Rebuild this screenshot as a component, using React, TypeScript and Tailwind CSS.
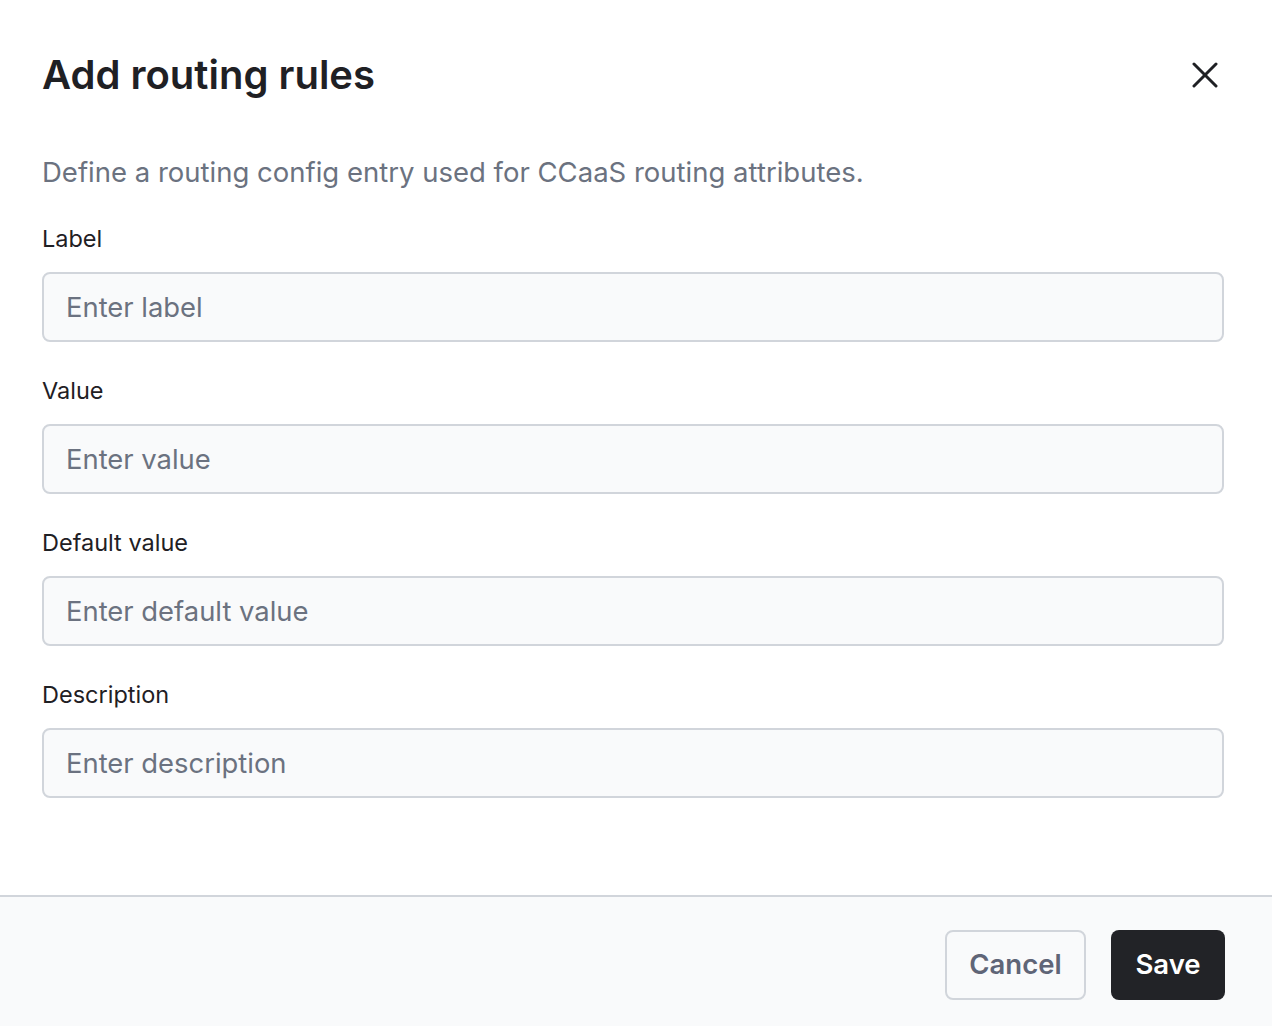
import React from 'react';

const fields = [
  { label: 'Label', placeholder: 'Enter label' },
  { label: 'Value', placeholder: 'Enter value' },
  { label: 'Default value', placeholder: 'Enter default value' },
  { label: 'Description', placeholder: 'Enter description' },
];

function CloseIcon() {
  return (
    <svg width="26" height="26" viewBox="0 0 26 26" fill="none" stroke="#1f2024" strokeWidth="3" strokeLinecap="round">
      <path d="M2 2 24 24" />
      <path d="M24 2 2 24" />
    </svg>
  );
}

export default function App() {
  return (
    <div
      className="flex h-[1026px] w-full flex-col bg-white"
      style={{ fontFamily: 'Inter, "Noto Sans", sans-serif' }}
    >
      <div className="flex-1 pl-[42px] pr-[48px] pt-[53px]">
        {/* Header */}
        <div className="flex items-center justify-between">
          <h1 className="text-[40px] font-semibold leading-[44px] text-[#1f2024]">
            Add routing rules
          </h1>
          <button className="mr-[6px] flex h-[26px] w-[26px] items-center justify-center">
            <CloseIcon />
          </button>
        </div>

        <p className="mt-[57px] text-[27.5px] leading-[36px] text-[#6b7280]">
          Define a routing config entry used for CCaaS routing attributes.
        </p>

        {/* Fields */}
        <div className="mt-[34px] flex flex-col gap-[34px]">
          {fields.map((f) => (
            <div key={f.label} className="flex flex-col gap-[18px]">
              <label className="text-[23.5px] leading-[30px] text-[#1f2024]">{f.label}</label>
              <input
                placeholder={f.placeholder}
                className="h-[70px] w-full rounded-[8px] border-2 border-[#d1d5db] bg-[#f9fafb] px-[22px] text-[27.4px] text-[#1f2024] outline-none placeholder:text-[#6b7280]"
              />
            </div>
          ))}
        </div>
      </div>

      {/* Footer */}
      <div className="flex h-[131px] justify-end gap-[25px] border-t-2 border-[#d1d5db] bg-[#f9fafb] px-[47px] pt-[33px]">
        <button className="h-[70px] w-[141px] rounded-[8px] border-2 border-[#d1d5db] bg-transparent text-[27.5px] font-semibold text-[#5f6577]">
          Cancel
        </button>
        <button className="h-[70px] w-[114px] rounded-[8px] bg-[#222327] text-[27.5px] font-semibold text-white">
          Save
        </button>
      </div>
    </div>
  );
}
